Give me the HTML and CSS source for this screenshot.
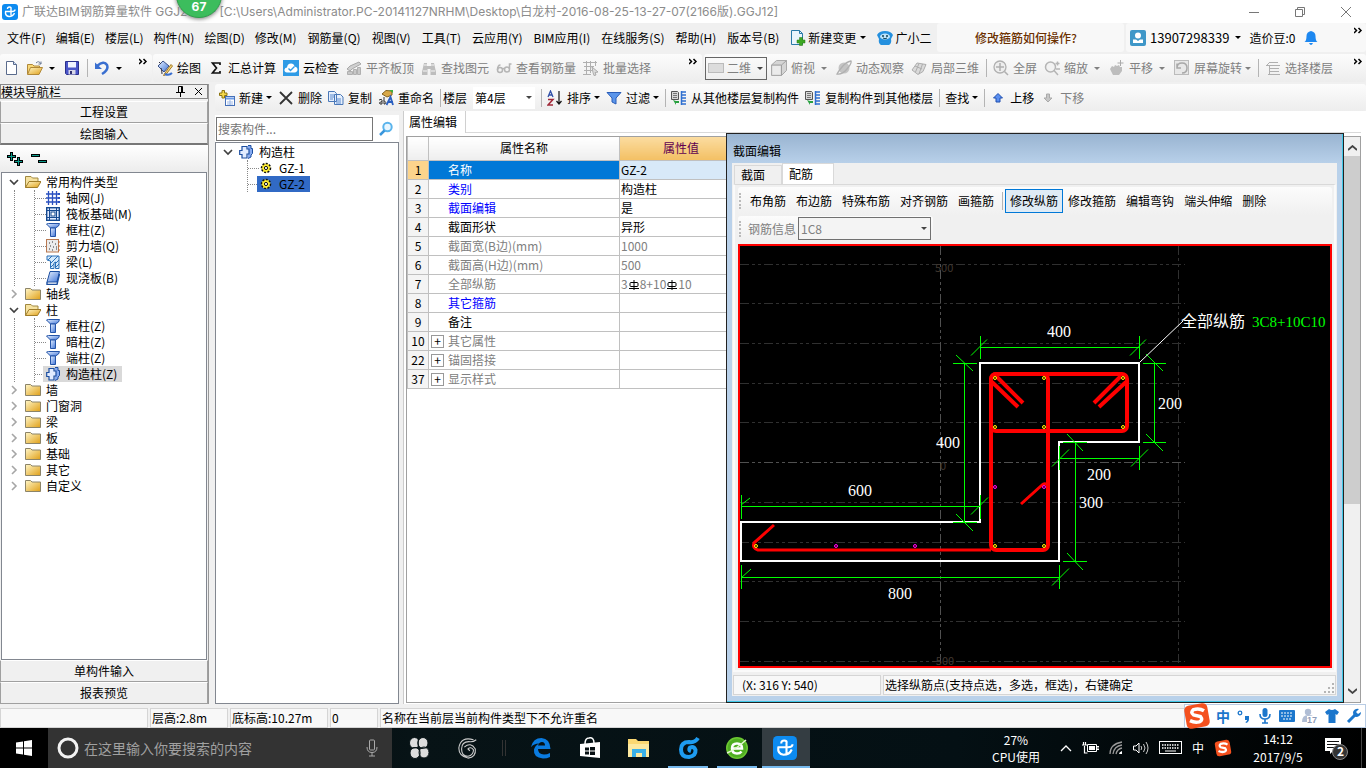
FILE: index.html
```html
<!DOCTYPE html>
<html lang="zh-CN">
<head>
<meta charset="utf-8">
<title>广联达BIM钢筋算量软件</title>
<link rel="stylesheet" href="styles.css">
</head>
<body>
<svg class="defs" width="0" height="0" aria-hidden="true">
  <defs>
    <linearGradient id="gold" x1="0" y1="0" x2="1" y2="1"><stop offset="0" stop-color="#fff6c8"/><stop offset="1" stop-color="#e0a018"/></linearGradient>
    <linearGradient id="blue" x1="0" y1="0" x2="1" y2="1"><stop offset="0" stop-color="#e8f2ff"/><stop offset="1" stop-color="#3f74d8"/></linearGradient>
    <symbol id="logo" viewBox="0 0 16 16"><rect width="16" height="16" rx="3" fill="#0d8bf0"/><path d="M5.500 5q0-2 2-2T9 5v6.500M3 7.500h7q3 0 3-2M3.500 7.500q-.5 4.500 3.500 5 4 0 5.500-3.500" fill="none" stroke="#fff" stroke-width="1.400"/></symbol>
    <symbol id="new" viewBox="0 0 16 16"><path d="M2.500 1.500h7l3 3v10h-10z" fill="#fff" stroke="#5a6b8c"/><path d="M9.500 1.500v3h3" fill="#cfe0fa" stroke="#5a6b8c"/></symbol>
    <symbol id="open" viewBox="0 0 16 16"><path d="M.5 14V4.500h5l1.500 1.500h5.500v2" fill="#f8d878" stroke="#b08838"/><path d="M.5 14.500l3-7h12l-3.500 7z" fill="url(#gold)" stroke="#b08838"/><path d="M9 3q3-3 5 1m0-2.500V4h-2.500" fill="none" stroke="#6a7a96"/></symbol>
    <symbol id="save" viewBox="0 0 16 16"><path d="M1.500 1.500h13v13h-12l-1-1z" fill="#4a55c8" stroke="#2a2f8c"/><path d="M4 2h8v5.500H4z" fill="#f0f3ff"/><path d="M4.500 10h7v4.500h-7z" fill="#d8d8e8"/><path d="M6 11h2v3H6z" fill="#303070"/></symbol>
    <symbol id="undo" viewBox="0 0 16 16"><path d="M3 6q7-6 10-1 2 5-5 9" fill="none" stroke="#3a6fd0" stroke-width="2.500"/><path d="M1 2.500V9h7z" fill="#3a6fd0"/></symbol>
    <symbol id="pen" viewBox="0 0 16 16"><path d="M1 6l5-5 6 5-5 6z" fill="url(#blue)" stroke="#3a5088"/><path d="M2 2l2 2M4 8q1 3 1 6" stroke="#334" fill="none"/><path d="M7 14.500l7-10 1.500 1.500-7 9-2 .5z" fill="#f8d878" stroke="#a07828"/><path d="M8 14q4 2 7-1" stroke="#3a6fd0" stroke-width="2" fill="none"/></symbol>
    <symbol id="sigma" viewBox="0 0 16 16"><path d="M12 5V3H4.500l4 5-4 5H12v-2" fill="none" stroke="#111" stroke-width="1.700"/></symbol>
    <symbol id="cloud" viewBox="0 0 16 16"><rect width="16" height="16" fill="#2e9be6"/><path d="M4 12.500q-3-.5-2.500-3 .5-2 2.500-2 .5-4 4-4 3 0 3.500 3 3 .5 3 3t-3 3z" fill="#fff"/><path d="M5.500 8.500l2 2 4-4" fill="none" stroke="#2e9be6" stroke-width="1.400"/></symbol>
    <symbol id="slab" viewBox="0 0 16 16"><path d="M1 9l3-3 9-4 2 2-9 5-2 2z" fill="#d0d0d0" stroke="#a8a8a8"/><path d="M1.500 11.500h5v3h-5zM7.500 9.500h3v5h-3zM11.500 7.500h3v7h-3z" fill="#c8c8c8" stroke="#b0b0b0"/></symbol>
    <symbol id="binoc" viewBox="0 0 16 16"><path d="M3 3h3v3h4V3h3l2 9v3H9.500V9h-3v6H1v-3z" fill="#bdbdbd"/><path d="M2 11h4M10 11h4M3 5h3M10 5h3" stroke="#f5f5f5"/></symbol>
    <symbol id="glass" viewBox="0 0 16 16"><g fill="none" stroke="#b5b5b5" stroke-width="1.500"><circle cx="4" cy="10" r="2.500"/><circle cx="11" cy="9.500" r="2.500"/><path d="M6.500 9q1-1 2 0M1.500 10q0-5 3-5M13.500 9V4h2"/></g></symbol>
    <symbol id="grid" viewBox="0 0 16 16"><path d="M0 2.500h14M1 6.500h10M1 10.500h8M0 14.500h8M3.500 1v14M7.500 1v12M12.500 1v5" stroke="#b0b0b0" fill="none"/><path d="M9 7l6 5-3 .5 1 2.500-2 .5-1-3z" fill="#ddd" stroke="#aaa"/></symbol>
    <symbol id="box2" viewBox="0 0 16 16"><rect x=".5" y="3.500" width="15" height="9" fill="#dcdcdc" stroke="#bbb"/></symbol>
    <symbol id="cube" viewBox="0 0 16 16"><path d="M.5 5l5-4.500h10v10l-5 5h-10z" fill="#d5d5d5" stroke="#aaa"/><path d="M.5 5h10v10.500M10.500 5l5-4.500" fill="none" stroke="#a0a0a0"/><path d="M1.500 6h8v8.500h-8z" fill="#ebebeb"/></symbol>
    <symbol id="orbit" viewBox="0 0 16 16"><circle cx="8" cy="8" r="5.500" fill="#c4c4c4"/><path d="M1 14q5 1 10-5t4-8q-5 1-9 6t-5 7z" fill="none" stroke="#b0b0b0" stroke-width="1.300"/></symbol>
    <symbol id="part" viewBox="0 0 16 16"><path d="M1 10l5-7 9 1.500-3 7-5 3z" fill="#dadada" stroke="#adadad"/><path d="M4 6l7 3M8 3.500L4.500 12M11.500 4L8 14" stroke="#adadad" fill="none"/></symbol>
    <symbol id="full" viewBox="0 0 16 16"><circle cx="7" cy="7" r="6" fill="#eee" stroke="#b0b0b0" stroke-width="1.300"/><path d="M7 3v8M3 7h8M11.500 11.500L15 15" stroke="#b0b0b0" stroke-width="1.500"/></symbol>
    <symbol id="zoomi" viewBox="0 0 16 16"><circle cx="6.500" cy="7" r="5" fill="#f2f2f2" stroke="#b5b5b5" stroke-width="1.500"/><path d="M10 10.500L14 15M11.500 3.500h4M13.500 1.500v4M12 9h4" stroke="#b5b5b5" stroke-width="1.500"/></symbol>
    <symbol id="hand" viewBox="0 0 16 16"><path d="M1 9l2-3 2 1 1-2 2 1 2-1 1 2 2 0v4l-3 4H4z" fill="#bdbdbd"/><path d="M8.500 3h6M11.500 0v6" stroke="#aaa"/></symbol>
    <symbol id="rot" viewBox="0 0 16 16"><rect x=".5" y=".5" width="14" height="14" fill="#e8e8e8" stroke="#bbb"/><path d="M3 8q0-5 5-5t5 5-5 5M3 3.500V8h4" fill="none" stroke="#a8a8a8" stroke-width="1.500"/></symbol>
    <symbol id="floor-set" viewBox="0 0 16 16"><path d="M4 2.500h9M1 5.500h14M5 8.500h9M5 11.500h9M3 14.500h12M4 3L1 6M4.500 6v8" stroke="#b0b0b0" fill="none"/></symbol>
    <symbol id="chg" viewBox="0 0 16 16"><path d="M1.500.5h8l3 3v11h-11z" fill="#eaf5fc" stroke="#2a7aa8"/><path d="M9.500.5v3h3" fill="none" stroke="#2a7aa8"/><path d="M9.500 7.500h3v2.500H15v3h-2.500v2.500h-3V13H7v-3h2.500z" fill="#3da822" stroke="#287614" stroke-width=".5"/></symbol>
    <symbol id="mascot" viewBox="0 0 16 16"><path d="M0 5q2-4 8-4t8 4l-2 4q1 4-2 6H4q-3-2-2-6z" fill="#2490de"/><ellipse cx="8" cy="6.500" rx="5" ry="3" fill="#bfe4fb"/><circle cx="6" cy="6" r="1" fill="#145"/><circle cx="10" cy="6" r="1" fill="#145"/><path d="M6 8q2 1.500 4 0" stroke="#145" fill="none"/></symbol>
    <symbol id="user" viewBox="0 0 16 16"><rect width="16" height="16" rx="2" fill="#3f97c8"/><circle cx="8" cy="5.500" r="3" fill="#fff"/><path d="M3 13V9.500h3l2 1.500 2-1.500h3V13z" fill="#fff"/></symbol>
    <symbol id="bell" viewBox="0 0 16 16"><path d="M1.500 12q2-1 2-6 0-4 4.500-5 4.500 1 4.500 5 0 5 2 6zM6 13h4q-2 4-4 0" fill="#1e88f0"/></symbol>
    <symbol id="addn" viewBox="0 0 16 16"><path d="M3 .5h2.500V3H8v2.500H5.500V8H3V5.500H.5V3H3z" fill="#f5d84a" stroke="#8c7410"/><rect x="6.500" y="6.500" width="9" height="9" fill="#fff" stroke="#4570b8"/><path d="M7 7.500h8v2H7z" fill="#6c9be6"/><path d="M8 12h6M8 14h6M11 10v5" stroke="#9db9e8"/></symbol>
    <symbol id="del" viewBox="0 0 16 16"><path d="M2 2l12 12M14 2L2 14" stroke="#333" stroke-width="1.800"/></symbol>
    <symbol id="copy" viewBox="0 0 16 16"><path d="M.5 1.500h6l2 2v8h-8zM6.500 4.500h6l2.500 2.500v7.500H6.500z" fill="#e6effc" stroke="#4a78b8"/><path d="M2 5h4M2 7h4M2 9h3M8 9h5M8 11h5M8 13h5" stroke="#5d8cd0"/></symbol>
    <symbol id="ren" viewBox="0 0 16 16"><path d="M4 4l4-3.500 6 .5v4l-5 2z" fill="#d8a848" stroke="#806020"/><path d="M11 0h4v3z" fill="#3cae3c"/><path d="M1 10q3-1.500 3 0v4H2q-2-1.500 2-2.500M6 7v7h1q2-1.500-1-3.500" fill="none" stroke="#333"/><path d="M8.500 15l4-8 2.500 8M10 12h5" stroke="#2a5fc0" stroke-width="1.800" fill="none"/></symbol>
    <symbol id="sort" viewBox="0 0 16 16"><path d="M1 7l2.500-6L6 7M2 5h3" fill="none" stroke="#3050a8" stroke-width="1.300"/><path d="M1 9.500h5L1 15h5" fill="none" stroke="#a02838" stroke-width="1.500"/><path d="M12 1v13M9.500 11l2.500 3 2.500-3" fill="none" stroke="#111" stroke-width="1.200"/></symbol>
    <symbol id="filt" viewBox="0 0 16 16"><path d="M1 2.500h14L10 8v6l-4-2V8z" fill="#5b95ea" stroke="#2a5db8"/></symbol>
    <symbol id="fcopy" viewBox="0 0 16 16"><path d="M.5 1.500h6l1 1v7h-7z" fill="#d8d8d8" stroke="#555"/><path d="M2 3.500h4M2 5.500h4M2 7.500h4" stroke="#777"/><path d="M2 10l3 5v-2h3v-2H5z" fill="#28a040"/><path d="M10.500 1v14M10.500 2H15M10.500 5H15M10.500 8H15M10.500 11H15M10.500 14H15" stroke="#2f6fd0" stroke-width="1.500"/></symbol>
    <symbol id="up" viewBox="0 0 16 16"><path d="M8 3.500l4.500 4.500H10v4H6V8H3.500z" fill="#5b8ff0" stroke="#1e4fb0"/></symbol>
    <symbol id="down" viewBox="0 0 16 16"><path d="M8 12L4 8h2.500V4h3v4H12z" fill="#c6c6c6" stroke="#aaa"/></symbol>
    <symbol id="fold" viewBox="0 0 16 14"><path d="M.5 12.500V1.500h5L7 3h8.500v9.500z" fill="url(#gold)" stroke="#8c8468"/></symbol>
    <symbol id="foldo" viewBox="0 0 16 14"><path d="M.5 12.500v-11H6L7.500 3H13v3.500" fill="#f6e2a0" stroke="#a08840"/><path d="M.5 12.500L4 6.500h12l-3.500 6z" fill="url(#gold)" stroke="#a07c28"/></symbol>
    <symbol id="axis" viewBox="0 0 14 14"><path d="M0 3h12M0 7h12M0 11h12M2.500 0v14M6.500 0v14M10.500 0v14" stroke="#2a50c0" stroke-width="1.300"/><path d="M12 2h2v2h-2zM12 6h2v2h-2zM12 10h2v2h-2z" fill="#2a50c0"/></symbol>
    <symbol id="raft" viewBox="0 0 14 14"><rect x=".7" y=".7" width="12.600" height="12.600" fill="#dfeaff" stroke="#164a90" stroke-width="1.400"/><path d="M1 3.500h12M1 10.500h12M3.500 1v12M10.500 1v12" stroke="#164a90"/><rect x="5" y="5" width="4" height="4" fill="#fff" stroke="#164a90"/></symbol>
    <symbol id="col" viewBox="0 0 14 14"><path d="M.5 1l2-.5h11l-1 2.500-3 2h-5z" fill="url(#blue)" stroke="#2454a8"/><path d="M4.500 5h5v8.500h-5z" fill="url(#blue)" stroke="#2454a8"/></symbol>
    <symbol id="wall" viewBox="0 0 14 14"><rect x=".5" y=".5" width="12" height="12.500" fill="#ececec" stroke="#b87850"/><path d="M3 4h1M6 3h1M9 5h1M4 7h1M7 8h1M3 10h1M6 11h1M10 10h1M10 8h1" stroke="#333"/><path d="M12 3h2M12 7h2M12 11h2" stroke="#c86830"/></symbol>
    <symbol id="beam" viewBox="0 0 14 14"><path d="M1 1h12v12.500H9.500V7L8 8v5.500H4.500V6L1 5z" fill="#d4eafc" stroke="#2a70b8"/><path d="M2 5l4-4M5 8l7-7M5 12l3-3M10 8l3-3M10 12l3-3" stroke="#2a70b8"/></symbol>
    <symbol id="pour" viewBox="0 0 14 14"><path d="M4 .5h9.500L11 11H1z" fill="url(#blue)" stroke="#1c4ea0"/><path d="M1 11v2.500h10L13.500 3" fill="none" stroke="#1c4ea0" stroke-width="1.400"/></symbol>
    <symbol id="gz" viewBox="0 0 14 14"><path d="M9 .5h3v3h1.500v5L12 10v2l-3 1.500" fill="#86aaf0" stroke="#1c4ea0"/><path d="M3 1.500h5V4h2v5H8v4H3V9.500H.7v-4H3z" fill="#e2ecff" stroke="#1c4ea0" stroke-width="1.200"/></symbol>
    <symbol id="gear" viewBox="0 0 12 12"><circle cx="6" cy="6" r="4.500" fill="#ffee30" stroke="#111" stroke-width="1.500" stroke-dasharray="2 1.400"/><circle cx="6" cy="6" r="1.600" fill="#fff" stroke="#111"/></symbol>
    <symbol id="S" viewBox="0 0 24 24"><rect x="2" y="2" width="20" height="20" rx="4" fill="#f4501e" transform="rotate(-10 12 12)"/><path d="M18 7.500q-4-2.500-9-1-3 2.500 0 4.500l6 1.500q2.500 3-1 4.500-4 1-8-1" fill="none" stroke="#fff" stroke-width="3"/></symbol>
    <symbol id="chev" viewBox="0 0 9 8"><path d="M0 1l2.500 2.500L0 6M4.500 1L7 3.500 4.500 6" fill="none" stroke="#000" stroke-width="1.500"/></symbol>
    <symbol id="open-arrow" viewBox="0 0 10 10"><path d="M1 3l4 4 4-4" fill="none" stroke="#404040" stroke-width="1.700"/></symbol>
    <symbol id="shut-arrow" viewBox="0 0 10 10"><path d="M3 1l4 4-4 4" fill="none" stroke="#a6a6a6" stroke-width="1.600"/></symbol>
    <symbol id="swirl" viewBox="0 0 24 24"><path d="M22 2q-3 5-9 4-8 0-8 7.500T13 21q7-1 6.500-7-1.500-4-5.500-2.500-2 2.500 1 3.500" fill="none" stroke="currentColor" stroke-width="4"/></symbol>
  </defs>
</svg>

<header class="title">
  <svg class="i16"><use href="#logo"/></svg>
  <span class="title-text">广联达BIM钢筋算量软件 GGJ2013 - [C:\Users\Administrator.PC-20141127NRHM\Desktop\白龙村-2016-08-25-13-27-07(2166版).GGJ12]</span>
  <div class="winbtns">
    <button aria-label="最小化"><svg width="12" height="12"><path d="M1 6.500h10" stroke="#777"/></svg></button>
    <button aria-label="还原"><svg width="12" height="12"><path d="M1.500 3.500h7v7h-7zM3.500 3V1.500h7v7H9" fill="none" stroke="#777"/></svg></button>
    <button aria-label="关闭"><svg width="12" height="12"><path d="M1 1l10 10M11 1L1 11" stroke="#777"/></svg></button>
  </div>
  <div class="ball">67</div>
</header>

<nav class="menu">
  <div class="menu-list">
    <button>文件(F)</button><button>编辑(E)</button><button>楼层(L)</button><button>构件(N)</button><button>绘图(D)</button><button>修改(M)</button><button>钢筋量(Q)</button><button>视图(V)</button><button>工具(T)</button><button>云应用(Y)</button><button>BIM应用(I)</button><button>在线服务(S)</button><button>帮助(H)</button><button>版本号(B)</button>
    <button class="drop"><svg class="i16"><use href="#chg"/></svg>新建变更</button>
    <button><svg class="i16"><use href="#mascot"/></svg>广小二</button>
  </div>
  <a class="tip" href="#">修改箍筋如何操作?</a>
  <div class="account">
    <button class="drop phone"><svg class="i16"><use href="#user"/></svg>13907298339</button>
    <button>造价豆:0</button>
    <button aria-label="通知"><svg class="i16"><use href="#bell"/></svg></button>
    <svg class="more"><use href="#chev"/></svg>
  </div>
</nav>

<div class="tools">
  <div class="group g-file">
    <button aria-label="新建"><svg class="i16"><use href="#new"/></svg></button>
    <button class="drop" aria-label="打开"><svg class="i16"><use href="#open"/></svg></button>
    <button aria-label="保存"><svg class="i16"><use href="#save"/></svg></button>
    <i class="sep"></i>
    <button class="drop" aria-label="撤销"><svg class="i16"><use href="#undo"/></svg></button>
    <svg class="more"><use href="#chev"/></svg>
  </div>
  <div class="group g-draw">
    <button><svg class="i16"><use href="#pen"/></svg>绘图</button>
    <button><svg class="i16"><use href="#sigma"/></svg>汇总计算</button>
    <button><svg class="i16"><use href="#cloud"/></svg>云检查</button>
    <button disabled><svg class="i16"><use href="#slab"/></svg>平齐板顶</button>
    <button disabled><svg class="i16"><use href="#binoc"/></svg>查找图元</button>
    <button disabled><svg class="i16"><use href="#glass"/></svg>查看钢筋量</button>
    <button disabled><svg class="i16"><use href="#grid"/></svg>批量选择</button>
    <svg class="more"><use href="#chev"/></svg>
  </div>
  <div class="group g-view">
    <div class="viewsel"><svg class="i16"><use href="#box2"/></svg><select aria-label="视图" disabled><option>二维</option></select></div>
    <button class="drop" disabled><svg class="i16"><use href="#cube"/></svg>俯视</button>
    <button disabled><svg class="i16"><use href="#orbit"/></svg>动态观察</button>
    <button disabled><svg class="i16"><use href="#part"/></svg>局部三维</button>
    <i class="sep"></i>
    <button disabled><svg class="i16"><use href="#full"/></svg>全屏</button>
    <button class="drop" disabled><svg class="i16"><use href="#zoomi"/></svg>缩放</button>
    <button class="drop" disabled><svg class="i16"><use href="#hand"/></svg>平移</button>
    <button class="drop tight" disabled><svg class="i16"><use href="#rot"/></svg>屏幕旋转</button>
    <i class="sep"></i>
    <button disabled><svg class="i16"><use href="#floor-set"/></svg>选择楼层</button>
    <svg class="more"><use href="#chev"/></svg>
  </div>
</div>

<main class="main">
  <aside class="nav">
    <div class="nav-head"><span>模块导航栏</span>
      <svg width="9" height="11"><path d="M2.500.5h4v6h-4zM0 6.500h9M4.500 7v4M5.500 1v5" fill="none" stroke="#000"/></svg>
      <svg width="9" height="9"><path d="M1 1l7 7M8 1L1 8" stroke="#000"/></svg>
    </div>
    <button class="bar">工程设置</button>
    <button class="bar active">绘图输入</button>
    <div class="nav-tools">
      <button aria-label="展开"><svg width="18" height="14"><path d="M4.500 0v9M0 4.500h9M11.500 5v9M7 9.500h9" stroke="#000" stroke-width="3"/><path d="M4.500 1v7M1 4.500h7M11.500 6v7M8 9.500h7" stroke="#0a9a8a"/></svg></button>
      <button aria-label="折叠"><svg width="18" height="14"><path d="M0 3.500h9M7 9.500h9" stroke="#000" stroke-width="3"/><path d="M1 3.500h7M8 9.500h7" stroke="#0a9a8a"/></svg></button>
    </div>
    <ul class="tree">
      <li><div class="node"><svg class="tog"><use href="#open-arrow"/></svg><svg class="fo"><use href="#foldo"/></svg>常用构件类型</div>
        <ul>
          <li><svg class="ic"><use href="#axis"/></svg>轴网(J)</li>
          <li><svg class="ic"><use href="#raft"/></svg>筏板基础(M)</li>
          <li><svg class="ic"><use href="#col"/></svg>框柱(Z)</li>
          <li><svg class="ic"><use href="#wall"/></svg>剪力墙(Q)</li>
          <li><svg class="ic"><use href="#beam"/></svg>梁(L)</li>
          <li><svg class="ic"><use href="#pour"/></svg>现浇板(B)</li>
        </ul></li>
      <li><div class="node"><svg class="tog"><use href="#shut-arrow"/></svg><svg class="fo"><use href="#fold"/></svg>轴线</div></li>
      <li><div class="node"><svg class="tog"><use href="#open-arrow"/></svg><svg class="fo"><use href="#foldo"/></svg>柱</div>
        <ul>
          <li><svg class="ic"><use href="#col"/></svg>框柱(Z)</li>
          <li><svg class="ic"><use href="#col"/></svg>暗柱(Z)</li>
          <li><svg class="ic"><use href="#col"/></svg>端柱(Z)</li>
          <li><span class="cur"><svg class="ic"><use href="#gz"/></svg>构造柱(Z)</span></li>
        </ul></li>
      <li><div class="node"><svg class="tog"><use href="#shut-arrow"/></svg><svg class="fo"><use href="#fold"/></svg>墙</div></li>
      <li><div class="node"><svg class="tog"><use href="#shut-arrow"/></svg><svg class="fo"><use href="#fold"/></svg>门窗洞</div></li>
      <li><div class="node"><svg class="tog"><use href="#shut-arrow"/></svg><svg class="fo"><use href="#fold"/></svg>梁</div></li>
      <li><div class="node"><svg class="tog"><use href="#shut-arrow"/></svg><svg class="fo"><use href="#fold"/></svg>板</div></li>
      <li><div class="node"><svg class="tog"><use href="#shut-arrow"/></svg><svg class="fo"><use href="#fold"/></svg>基础</div></li>
      <li><div class="node"><svg class="tog"><use href="#shut-arrow"/></svg><svg class="fo"><use href="#fold"/></svg>其它</div></li>
      <li><div class="node"><svg class="tog"><use href="#shut-arrow"/></svg><svg class="fo"><use href="#fold"/></svg>自定义</div></li>
    </ul>
    <button class="bar">单构件输入</button>
    <button class="bar">报表预览</button>
  </aside>

  <section class="work">
    <div class="group g-comp">
      <button class="drop tight"><svg class="i16"><use href="#addn"/></svg>新建</button>
      <button><svg class="i16"><use href="#del"/></svg>删除</button>
      <button><svg class="i16"><use href="#copy"/></svg>复制</button>
      <button><svg class="i16"><use href="#ren"/></svg>重命名</button>
      <div class="floor"><i class="sep"></i><label for="floor">楼层</label><span class="selwrap"><select id="floor"><option>第4层</option></select></span></div>
      <i class="sep"></i>
      <button class="drop tight"><svg class="i16"><use href="#sort"/></svg>排序</button>
      <button class="drop tight"><svg class="i16"><use href="#filt"/></svg>过滤</button>
      <i class="sep"></i>
      <button><svg class="i16"><use href="#fcopy"/></svg>从其他楼层复制构件</button>
      <button><svg class="i16"><use href="#fcopy"/></svg>复制构件到其他楼层</button>
      <i class="sep"></i>
      <button class="drop tight">查找</button>
      <i class="sep"></i>
      <button><svg class="i16"><use href="#up"/></svg>上移</button>
      <button disabled><svg class="i16"><use href="#down"/></svg>下移</button>
    </div>
    <div class="panes">
      <section class="comps">
        <form class="search">
          <input type="text" aria-label="搜索构件" placeholder="搜索构件...">
          <button type="button" aria-label="搜索"><svg width="16" height="16"><circle cx="9.500" cy="6" r="4.200" fill="#e8f6ff" stroke="#5ab4ec" stroke-width="2"/><path d="M6.500 9.500L2 14" stroke="#3a96dc" stroke-width="2.500"/></svg></button>
        </form>
        <ul class="tree comp-tree">
          <li><div class="node"><svg class="tog"><use href="#open-arrow"/></svg><svg class="fo"><use href="#gz"/></svg>构造柱</div>
            <ul>
              <li><span class="lf"><svg class="ge"><use href="#gear"/></svg>GZ-1</span></li>
              <li><span class="lf sel"><svg class="ge"><use href="#gear"/></svg>GZ-2</span></li>
            </ul></li>
        </ul>
      </section>
      <section class="props">
        <div class="tabs"><button class="on">属性编辑</button></div>
        <div class="sheet">
          <table>
            <thead><tr><th></th><th>属性名称</th><th class="hl">属性值</th></tr></thead>
            <tbody>
              <tr class="on"><td>1</td><td>名称</td><td>GZ-2</td></tr>
              <tr class="key"><td>2</td><td>类别</td><td>构造柱</td></tr>
              <tr class="key"><td>3</td><td>截面编辑</td><td>是</td></tr>
              <tr><td>4</td><td>截面形状</td><td>异形</td></tr>
              <tr class="off"><td>5</td><td>截面宽(B边)(mm)</td><td>1000</td></tr>
              <tr class="off"><td>6</td><td>截面高(H边)(mm)</td><td>500</td></tr>
              <tr class="off"><td>7</td><td>全部纵筋</td><td>3<svg class="rb" viewBox="0 0 10 10"><path d="M0 8.500h10M5 0v10M1 3.500q0-1 1-1h6q1 0 1 1v2q0 1-1 1H2q-1 0-1-1z" fill="none" stroke="#000"/></svg>8+10<svg class="rb" viewBox="0 0 10 10"><path d="M0 8.500h10M5 0v10M1 3.500q0-1 1-1h6q1 0 1 1v2q0 1-1 1H2q-1 0-1-1z" fill="none" stroke="#000"/></svg>10</td></tr>
              <tr class="key"><td>8</td><td>其它箍筋</td><td></td></tr>
              <tr><td>9</td><td>备注</td><td></td></tr>
              <tr class="off exp"><td>10</td><td><button aria-label="展开">+</button>其它属性</td><td></td></tr>
              <tr class="off exp"><td>22</td><td><button aria-label="展开">+</button>锚固搭接</td><td></td></tr>
              <tr class="off exp"><td>37</td><td><button aria-label="展开">+</button>显示样式</td><td></td></tr>
            </tbody>
          </table>
          <div class="scroll">
            <svg width="9" height="6"><path d="M0 5l4.500-4L9 5" fill="none" stroke="#444" stroke-width="1.700"/></svg>
            <i></i><b></b>
            <svg width="9" height="6"><path d="M0 1l4.500 4L9 1" fill="none" stroke="#444" stroke-width="1.700"/></svg>
          </div>
        </div>
      </section>
    </div>
  </section>

  <section class="dialog" role="dialog" aria-label="截面编辑">
    <h2>截面编辑</h2>
    <div class="dlg-body">
      <div class="dlg-tabs"><button>截面</button><button class="on">配筋</button></div>
      <div class="dlg-page">
        <div class="dlg-tools">
          <i class="grip"></i>
          <button>布角筋</button><button>布边筋</button><button>特殊布筋</button><button>对齐钢筋</button><button>画箍筋</button><i class="sep"></i><button class="on">修改纵筋</button><button>修改箍筋</button><button>编辑弯钩</button><button>端头伸缩</button><button>删除</button>
        </div>
        <div class="dlg-info">
          <i class="grip"></i><label for="rebar">钢筋信息</label>
          <span class="selwrap"><select id="rebar" disabled><option>1C8</option></select></span>
        </div>
        <svg class="cad" viewBox="740 246 590 420">
          <g class="grid" stroke-dasharray="9 3 3 3 3 3">
            <path d="M740 264.500h445M740 303.500h445M740 343.500h445M740 383.500h445M740 422.500h445M740 502.500h445M740 542.500h445M740 581.500h445M740 621.500h445M740 661.500h445M1178.500 246v420"/>
            <path class="axis" d="M740 462.500h445M940.500 246v420"/>
          </g>
          <g class="scale"><text x="935" y="272">500</text><text x="940" y="470">0</text><text x="932" y="665">-500</text></g>
          <path class="outline" d="M980 363h159v79h-80v119H741v-39h239z"/>
          <path class="dim" d="M980.500 347.500h159M980.500 336v23M1139.500 336v23M971 355.500l16-16M1130 355.500l16-16
            M964.500 363v160M953 363.500h24M953 522.500h24M956 355l17 16M956 514l17 17
            M741 506.500h239M741.500 495v24M980.500 495v24M741 505l9-7M971 514.500l17-17
            M741 577.500h318M741.500 565v24M1059.500 565v24M741 578l10-9M1052 585.500l17-17
            M1154.500 363v80M1143 363.500h23M1143 442.500h23M1146 354l17 17M1146 434l17 17
            M1059 458.500h80M1059.500 446v24M1139.500 446v24M1052 466.500l17-17M1131 466.500l17-17
            M1075.500 442v119M1063 442.500h24M1063 561.500h24M1067 434l16 17M1067 553l16 17"/>
          <path class="leader" d="M1140 362l43-41"/>
          <g class="bars">
            <rect x="991" y="374" width="136" height="57" rx="5"/>
            <rect x="991" y="374" width="57" height="176" rx="5"/>
            <path d="M996 376l27 27M992 382l26 25M1121 376l-27 27M1126 382l-27 25"/>
            <path class="thin" d="M1048 486q-3-4-6-1l-21 19M991 550H758q-6-2-4-7l20-18"/>
          </g>
          <g class="dot y"><circle cx="995" cy="378" r="1.500"/><circle cx="1044" cy="378" r="1.500"/><circle cx="1123" cy="378" r="1.500"/><circle cx="995" cy="427" r="1.500"/><circle cx="1044" cy="427" r="1.500"/><circle cx="1123" cy="427" r="1.500"/><circle cx="995" cy="546" r="1.500"/><circle cx="1044" cy="546" r="1.500"/><circle cx="756" cy="546" r="1.500"/></g>
          <g class="dot m"><circle cx="995" cy="487" r="1.500"/><circle cx="1044" cy="487" r="1.500"/><circle cx="836" cy="546" r="1.500"/><circle cx="915" cy="546" r="1.500"/></g>
          <g class="val"><text x="1047" y="337">400</text><text x="936" y="448">400</text><text x="1158" y="409">200</text><text x="1087" y="480">200</text><text x="1079" y="508">300</text><text x="848" y="496">600</text><text x="888" y="599">800</text></g>
          <text class="note" x="1181" y="327">全部纵筋</text><text class="spec" x="1252" y="327">3C8+10C10</text>
        </svg>
      </div>
      <div class="dlg-status"><span>(X: 316 Y: 540)</span><span>选择纵筋点(支持点选，多选，框选)，右键确定</span>
        <svg width="11" height="11"><path d="M8 1h2M8 5h2M4 5h2M8 9h2M4 9h2M0 9h2" stroke="#b5b5b5" stroke-width="2"/></svg></div>
    </div>
  </section>
</main>

<div class="status"><span></span><span>层高:2.8m</span><span>底标高:10.27m</span><span>0</span><span>名称在当前层当前构件类型下不允许重名</span>
  <div class="ime">
    <svg width="28" height="28"><use href="#S"/></svg>
    <b>中</b>
    <svg width="14" height="14"><circle cx="3" cy="4" r="1.800" fill="none" stroke="#1b76cc" stroke-width="1.300"/><path d="M8 7h4v3q0 3-3 4l-.5-1q2-1 1.500-2H8z" fill="#1b76cc"/></svg>
    <svg width="14" height="16"><rect x="4.500" y="0" width="5" height="9" rx="2.500" fill="#1b76cc"/><path d="M2 6q0 5 5 5t5-5M7 11v4M4 15h6" fill="none" stroke="#1b76cc" stroke-width="1.600"/></svg>
    <svg width="16" height="12"><rect width="16" height="12" rx="1" fill="#1b76cc"/><path d="M2 3h12M2 6h12M4 9h8" stroke="#fff" stroke-dasharray="2 1"/></svg>
    <svg width="16" height="16"><circle cx="6" cy="4" r="3.200" fill="#b0bdd4"/><path d="M0 14q0-7 6-7 4 0 5 1H5v6z" fill="#b0bdd4"/><text x="5" y="15" class="tiny">17</text></svg>
    <svg width="14" height="14"><path d="M4 0q3 2 6 0l4 3-2 3-1.500-1v9h-7V5L2 6 0 3z" fill="#1b76cc"/></svg>
    <svg width="16" height="16"><path d="M2 14l7-7" stroke="#1b76cc" stroke-width="3"/><path d="M13 1q-4-1-6 3 0 5 4 5 4-1 4-5l-3 2-2-2z" fill="#1b76cc"/></svg>
  </div>
</div>

<footer class="taskbar">
  <button class="start" aria-label="开始"><svg width="16" height="16"><path d="M0 2.500l7-1v6H0zM8 1.300L16 0v7.500H8zM0 8.500h7v6l-7-1zM8 8.500h8V16l-8-1.300z" fill="#fff"/></svg></button>
  <label class="find"><svg width="22" height="22"><circle cx="11" cy="11" r="9" fill="none" stroke="#f2f2f2" stroke-width="3"/></svg>
    <input type="text" placeholder="在这里输入你要搜索的内容" aria-label="搜索">
    <svg width="12" height="18"><rect x="3.500" y="1" width="5" height="10" rx="1" fill="none" stroke="#aaa"/><path d="M1 8q0 5.500 5 5.500T11 8M6 13.500V17M3 17h6" fill="none" stroke="#aaa"/></svg></label>
  <div class="apps">
    <button aria-label="应用"><svg width="24" height="24" viewBox="0 0 24 24"><g fill="#ddd" stroke="#071316"><ellipse cx="7.500" cy="7" rx="5" ry="5.500"/><ellipse cx="16" cy="7" rx="5" ry="5.500"/><ellipse cx="8" cy="17" rx="5" ry="5.500"/><ellipse cx="17" cy="16.500" rx="5" ry="5.500"/></g><path d="M12 2q-2 5 0 10t0 10M3 13q5-2 9-1t10-1" fill="none" stroke="#071316" stroke-width="1.200"/></svg></button>
    <button aria-label="旋涡"><svg width="22" height="22" viewBox="0 0 24 24"><path d="M21 3q-4 3-8 2-8 0-8 8t7 8q6-1 6-7-3-4-6-1l2 2M18 3Q4-1 2 12q0 9 10 11 9-1 8-10-5-8-12-2" fill="none" stroke="#ccc" stroke-width="1.200"/></svg></button>
    <i class="dbl"></i>
    <button aria-label="Edge"><svg width="22" height="22" viewBox="0 0 22 22"><path d="M1 10Q3 1 11.500 1 20 1.500 20.500 12H8q0 5 6 5.500 3 0 6-1.500v4q-3 1.500-7 1.500-10-1-9-9 1-4 5-6-5 0-8 3.500zm7-1.500h7Q15 5 12 5T8 8.500z" fill="#0a7be0"/></svg></button>
    <button aria-label="商店"><svg width="22" height="24" viewBox="0 0 22 24"><path d="M1 8l20-2v16l-20-2z" fill="#fff"/><path d="M6 8q0-6 4-6 5-1 5 5" fill="none" stroke="#fff" stroke-width="1.500"/><path d="M6 11.500h4v3H6zM11 11h5v3.500h-5zM6 15.500h4v3H6zM11 15.500h5v3.500h-5z" fill="#071013"/></svg></button>
    <button aria-label="文件资源管理器"><svg width="22" height="20" viewBox="0 0 22 20"><path d="M0 1h8l2 2h11v16H0z" fill="#fbd872"/><path d="M0 6h21v13H0z" fill="#fde9a0"/><path d="M4 19v-8h14v8h-4v-4H8v4z" fill="#3ab0e8"/></svg></button>
    <button class="run swirl" aria-label="广联达"><svg width="24" height="24"><use href="#swirl"/></svg></button>
    <button class="run" aria-label="浏览器"><svg width="24" height="24" viewBox="0 0 24 24"><circle cx="12" cy="12" r="11" fill="#6cc832"/><circle cx="12" cy="12" r="9.500" fill="#4fae22"/><path d="M7 12.500h10q0-5-5-5t-5 5 5 5q3 0 4.500-2" fill="none" stroke="#fff" stroke-width="2.500"/><path d="M2 17Q10 14 21 4" stroke="#e4f8d0" fill="none" stroke-width="1.500"/></svg></button>
    <button class="run cur" aria-label="钢筋算量"><svg width="24" height="24"><use href="#logo"/></svg></button>
  </div>
  <div class="cpu">27%<br>CPU使用</div>
  <div class="tray">
    <svg width="12" height="8"><path d="M1 7l5-5 5 5" fill="none" stroke="#fff" stroke-width="1.300"/></svg>
    <svg width="17" height="14"><path d="M5.500 3.500h9v7h-9zM15 5.500h2v3h-2z" fill="none" stroke="#fff"/><path d="M7 5h6v4H7z" fill="#fff"/><path d="M0 4h5M1.500 1v3M3.500 1v3M2.500 5v7h3" stroke="#fff" stroke-width="1.200" fill="none"/></svg>
    <svg width="14" height="14"><path d="M1 13Q1 3 13 1M4 13q1-8 9-9M7 13q1-5 6-6" fill="none" stroke="#999" stroke-width="1.300"/><path d="M10 13q0-2 3-3v3z" fill="#fff"/></svg>
    <svg width="16" height="14"><path d="M.5 5H3l3-3v10L3 9H.5z" fill="none" stroke="#fff"/><path d="M8 5q1.500 2 0 4M10.500 3q3 4 0 8M13 1q4 6 0 12" fill="none" stroke="#ccc"/></svg>
    <svg width="23" height="14"><rect x=".5" y=".5" width="22" height="12" fill="none" stroke="#fff"/><path d="M3 4h17M3 7h17" stroke="#fff" stroke-width="1.300" stroke-dasharray="1.500 1"/><path d="M6 10h11" stroke="#fff"/></svg>
    <span>中</span>
    <svg width="18" height="18"><use href="#S"/></svg>
  </div>
  <div class="clock">14:12<br>2017/9/5</div>
  <button class="note-btn" aria-label="通知"><svg width="26" height="26"><path d="M1 3h16v13H9l-3 3v-3H1z" fill="#fff"/><path d="M3 6.500h12M3 9.500h12M3 12.500h8" stroke="#111"/><circle cx="16" cy="17" r="7.500" fill="#333" stroke="#888"/><text x="13" y="21">2</text></svg></button>
  <i class="edge"></i>
</footer>
</body>
</html>
```
FILE: styles.css
```css
* { box-sizing: border-box; }
body {
  margin: 0;
  min-height: 100vh;
  display: flex;
  flex-direction: column;
  overflow: hidden;
  background: #f0f0f0;
  color: #000;
  font: 12px/16px "Noto Sans CJK SC", sans-serif;
}
button, input, select { font: inherit; color: inherit; }
button {
  display: inline-flex;
  align-items: center;
  gap: 4px;
  margin: 0;
  padding: 0;
  border: 0;
  background: none;
  white-space: nowrap;
}
button:disabled { color: #808080; }
select { appearance: none; border: 0; background: none; opacity: 1; padding: 0; }
svg { flex: none; display: block; }
ul { list-style: none; margin: 0; padding: 0; }
.defs { position: absolute; }
.i16 { width: 16px; height: 16px; }
.more { width: 9px; height: 8px; margin-left: auto; align-self: flex-start; margin-top: 4px; }

/* title bar */
.title {
  position: relative;
  display: flex;
  align-items: center;
  gap: 4px;
  height: 23px;
  padding: 0 14px 0 2px;
  background: #fff;
  color: #8c8c8c;
  font-family: Inter, "Noto Sans CJK SC", sans-serif;
}
.title-text { white-space: nowrap; }
.winbtns { display: flex; gap: 34px; margin-left: auto; }
.ball {
  position: absolute;
  left: 176px;
  top: -28px;
  z-index: 3;
  width: 46px;
  height: 46px;
  padding-top: 26px;
  border-radius: 50%;
  border: 1px solid #2f9f4c;
  background: #3cbd5d;
  box-shadow: 0 1px 4px #777;
  color: #fff;
  font-weight: bold;
  text-align: center;
}

/* menu */
.menu { display: flex; height: 31px; padding-bottom: 2px; align-items: stretch; }
.menu-list { flex: none; display: flex; gap: 10px; padding-left: 7px; width: 937px; }
.menu-list button { gap: 2px; }
.menu-list button:nth-child(n+7) { margin-left: 1px; }
.tip {
  flex: 0 0 187px;
  display: flex;
  align-items: center;
  padding-left: 38px;
  background: #f8f8f8;
  border-radius: 3px;
  color: #6b3000;
  font-weight: 500;
  text-decoration: none;
}
.account {
  flex: 1;
  display: flex;
  gap: 8px;
  margin-left: 2px;
  padding: 0 3px 0 4px;
  background: #f8f8f8;
  border-radius: 3px;
}
.phone { font-size: 13px; }
.drop::after {
  content: "";
  margin: 0 2px;
  border: 3px solid transparent;
  border-top-color: currentColor;
  border-bottom: 0;
}
.drop.tight::after { margin: 0 0 0 -1px; }
.menu .drop::after { margin: 0 0 0 2px; }

/* toolbars */
.tools { display: flex; height: 30px; padding-bottom: 2px; }
.group {
  display: flex;
  align-items: center;
  gap: 7px;
  padding: 0 4px;
  border-radius: 3px;
  background: linear-gradient(#fcfcfc, #ededed);
}
.sep { flex: none; width: 1px; height: 18px; background: #b4b4b4; }
.group .sep { margin-right: -1px; }
.g-file { flex: none; width: 152px; }
.g-draw { flex: none; width: 549px; margin-left: 1px; }
.g-view { flex: 1; margin-left: 2px; padding: 0 3px 0 1px; }
.viewsel, .selwrap { position: relative; display: flex; align-items: center; }
.viewsel {
  gap: 3px;
  width: 62px;
  height: 23px;
  padding-left: 2px;
  border: 1px solid #666;
  margin-right: -3px;
}
.viewsel select { width: 40px; color: #808080; }
.viewsel::after, .selwrap::after {
  content: "";
  position: absolute;
  right: 3px;
  border: 3px solid transparent;
  border-top-color: #444;
  border-bottom: 0;
}

/* body */
.main { position: relative; flex: 1; display: flex; gap: 6px; min-height: 0; padding-bottom: 2px; }
.nav { display: flex; flex-direction: column; width: 209px; border-right: 1px solid #999; }
.nav-head {
  display: flex;
  align-items: center;
  gap: 9px;
  height: 15px;
  padding-right: 4px;
  border: 1px solid #888;
  margin-bottom: 2px;
}
.nav-head span { margin-right: auto; }
.bar {
  justify-content: center;
  height: 22px;
  border: 1px solid #a0a0a0;
  border-top-color: #fff;
}
.bar.active { border-bottom: 2px solid #777; }
.nav-tools { display: flex; gap: 6px; height: 27px; padding: 0 7px; background: linear-gradient(#fff, #ececec); }
.tree {
  flex: 1;
  margin: 0 1px;
  padding-top: 1px;
  border: 1px solid #828790;
  background: #fff;
}
.node, .tree li li { display: flex; align-items: center; height: 16px; white-space: nowrap; }
.node { padding-left: 7px; }
.tog { width: 10px; height: 10px; margin-right: 6px; }
.fo { width: 16px; height: 14px; margin-right: 5px; }
.tree ul { position: relative; margin-left: 32px; border-left: 1px dotted #888; }
.nav .tree ul::before {
  content: "";
  position: absolute;
  left: -21px;
  top: 0;
  bottom: 0;
  border-left: 1px dotted #888;
}
.tree li li::before { content: ""; width: 11px; border-top: 1px dotted #888; }
.ic { width: 14px; height: 14px; margin-right: 6px; }
.cur { display: flex; align-items: center; margin-left: -3px; padding-left: 3px; padding-right: 5px; background: #d9d9d9; }

.work { flex: 1; min-width: 0; display: flex; flex-direction: column; }
.g-comp { height: 27px; gap: 6px; }
.floor { display: flex; align-items: center; gap: 3px; }
.floor .selwrap { margin-left: 3px; background: #fff; width: 62px; height: 22px; }
.floor select { width: 62px; padding-left: 2px; }
.panes { flex: 1; display: flex; gap: 4px; min-height: 0; }
.comps { display: flex; flex-direction: column; width: 184px; background: #fff; margin-top: 4px; }
.search { display: flex; height: 27px; padding: 2px 0 1px 1px; margin: 0; }
.search input { width: 157px; padding: 0 1px; border: 1px solid #767676; background: #fff; }
.search button { flex: 1; justify-content: center; }
input::placeholder { color: #757575; opacity: 1; }
.comp-tree { margin: 0; }
.comp-tree ul { margin-left: 31px; }
.comp-tree .fo { width: 14px; margin-right: 6px; }
.lf { display: flex; align-items: center; padding: 0 5px 0 3px; height: 16px; margin-left: -2px; }
.lf.sel { background: #316ac5; }
.ge { width: 12px; height: 12px; margin-right: 7px; }

.props { flex: 1; min-width: 0; display: flex; flex-direction: column; background: #fff; padding: 0 5px 1px 0; border-left: 1px solid #ccc; }
.tabs { display: flex; height: 22px; }
.tabs .on { padding: 0 8px 0 5px; border-right: 1px solid #d0d0d0; }
.tabs::after { content: ""; flex: 1; border-bottom: 1px solid #d9d9d9; }
.sheet { flex: 1; display: flex; margin: 3px 0 0 2px; border: 1px solid #a0a0a0; }
table { flex: 1; align-self: flex-start; border-collapse: collapse; table-layout: fixed; width: 100%; }
th, td { height: 19px; padding: 0; border: 1px solid #c0c0c0; line-height: 16px; }
th { height: 23px; font-weight: normal; background: linear-gradient(#fff, #eee); border-top: 0; }
th:first-child { width: 21px; }
th:nth-child(2) { width: 191px; }
th.hl { background: linear-gradient(#fbdca0, #f3c064); color: #600050; text-align: left; padding-left: 43px; }
td:first-child { background: #f4f4f4; text-align: center; }
td:nth-child(2) { padding-left: 19px; }
td:nth-child(3) { padding-left: 1px; }
tr.on td { background: #d8e9f8; }
tr.on td:first-child { background: #fcd48c; }
tr.on td:nth-child(2) { background: #0078d7; color: #fff; }
tr.key td:nth-child(2) { color: #00f; }
tr.off td:nth-child(n+2) { color: #808080; }
tr.exp td:nth-child(2) { padding-left: 2px; }
td button {
  float: left;
  justify-content: center;
  width: 13px;
  height: 13px;
  margin: 2px 4px 0 0;
  border: 1px solid #999;
  background: #fff;
  color: #000;
}
.rb { display: inline-block; width: 10px; height: 10px; margin: 0 1px; vertical-align: -1px; }
.scroll { display: flex; flex-direction: column; align-items: center; width: 16px; padding: 8px 0; background: #f0f0f0; }
.scroll i { flex: 348; width: 16px; margin-top: 5px; background: #cdcdcd; }
.scroll b { flex: 184; }

/* section editor window */
.dialog {
  position: absolute;
  left: 726px;
  right: 22px;
  top: 49px;
  bottom: 3px;
  display: flex;
  flex-direction: column;
  padding: 0 6px 6px 5px;
  border: 1px solid #222;
  box-shadow: inset -1px -1px #40c8e8;
  background: linear-gradient(#99b4d1, #b9d1ea 30px);
}
h2 { margin: 0; padding: 9px 1px 4px; font: inherit; height: 29px; }
.dlg-body { flex: 1; display: flex; flex-direction: column; background: #f0f0f0; }
.dlg-tabs { display: flex; align-items: flex-end; height: 21px; padding-left: 2px; }
.dlg-tabs button { height: 19px; padding: 0 16px 0 6px; border: 1px solid #d9d9d9; border-bottom: 0; }
.dlg-tabs .on { height: 21px; padding: 0 20px 1px 6px; background: #fff; }
.dlg-page { flex: 1; display: flex; flex-direction: column; margin: 0 1px; padding: 2px 2px 2px 3px; border: 2px solid #fafafa; border-top: 1px solid #d9d9d9; }
.dlg-tools, .dlg-info { display: flex; align-items: center; border-radius: 3px; background: linear-gradient(#fcfcfc, #f0f0f0); }
.dlg-tools { height: 28px; }
.dlg-info { align-self: flex-start; height: 25px; margin: 1px 0 3px; padding-right: 2px; color: #808080; gap: 2px; }
.dlg-tools button { height: 24px; padding: 0 5px; }
.dlg-tools .sep { margin: 0 2px 0 3px; }
.dlg-tools .on { border: 1px solid #0078d7; background: #dfebf5; padding: 0 4px; }
.grip { width: 3px; height: 16px; margin: 0 3px 0 1px; border-left: 2px dotted #bbb; }
.dlg-info .grip { margin-right: 4px; }
.dlg-info .selwrap { width: 133px; height: 23px; border: 1px solid #707070; background: #f4f4f4; }
.dlg-info select { width: 130px; padding-left: 2px; color: #808080; }
.cad { flex: 1 1 0; width: 100%; min-height: 0; border: 2px solid #f00; background: #000; }
.cad path, .cad rect { fill: none; }
.grid { stroke: #303030; }
.grid .axis { stroke: #505050; }
.scale { fill: #403830; font: 11px "Noto Sans CJK SC", sans-serif; }
.outline { stroke: #fff; stroke-width: 2; }
.dim { stroke: #0f0; }
.leader { stroke: #fff; }
.bars { stroke: #f00; stroke-width: 4; }
.bars .thin { stroke-width: 3; }
.dot { stroke-width: 1; fill: #400; }
.dot.y { stroke: #ff0; }
.dot.m { stroke: #f0f; }
.val, .spec { fill: #fff; font: 16px "Liberation Serif", serif; }
.spec { fill: #0f0; font-size: 15px; }
.note { fill: #fff; font: 16px "Noto Sans CJK SC", sans-serif; }
.dlg-status { display: flex; gap: 2px; height: 24px; padding: 3px 1px 1px; position: relative; }
.dlg-status span { border: 1px solid #d5d5d5; background: #f8f8f8; padding: 1px; }
.dlg-status span:first-child { width: 148px; padding-left: 8px; }
.dlg-status span:nth-child(2) { flex: 1; }
.dlg-status svg { position: absolute; right: 2px; bottom: 2px; }

/* status bar */
.status { position: relative; display: flex; gap: 2px; height: 22px; padding-top: 2px; }
.status span { width: 98px; border: 1px solid #d5d5d5; background: #f8f8f8; padding: 1px; white-space: nowrap; }
.status span:nth-child(1) { width: 148px; }
.status span:nth-child(2) { width: 78px; }
.status span:nth-child(4) { width: 48px; }
.status span:nth-child(5) { flex: 1; }
.ime {
  position: absolute;
  right: 0;
  bottom: 0;
  display: flex;
  align-items: center;
  gap: 7px;
  height: 24px;
  padding-right: 3px;
  border: 1px solid #b8cce4;
  background: #fff;
  color: #1b76cc;
}
.ime svg:first-child { margin: 0 -2px 0 -2px; }
.ime b { font-size: 14px; }
.tiny { font: bold 9px "Liberation Sans", sans-serif; fill: #8c9cb8; }

/* taskbar */
.taskbar { display: flex; align-items: stretch; height: 40px; background: linear-gradient(90deg, #000, #071316 30%, #041014 70%, #000); color: #fff; }
.start { width: 48px; justify-content: center; background: #000; }
.find { display: flex; align-items: center; gap: 5px; width: 344px; padding: 0 14px 0 9px; background: #333; }
.find input { flex: 1; min-width: 0; border: 0; background: none; font-size: 14px; padding: 0; }
.find input::placeholder { color: #a0a0a0; }
.apps { display: flex; align-items: stretch; padding-left: 2px; }
.apps button { width: 49px; justify-content: center; }
.apps .dbl { width: 4px; height: 16px; margin: 12px 10px; border: solid #333; border-width: 0 1px; }
.apps .run { box-shadow: inset 0 -2px #76b9ed; width: 40px; margin-left: 5px; }
.apps .run + .run:not(.cur) { margin-left: 9px; }
.apps .run.cur { width: 48px; background: #343d42; }
.swirl { color: #1e9cf0; }
.cpu { margin-left: auto; width: 60px; padding-top: 3px; text-align: center; line-height: 17px; }
.tray { display: flex; align-items: center; gap: 10px; margin-left: 14px; }
.clock { width: 80px; margin-left: 6px; padding-top: 2px; text-align: center; line-height: 18px; }
.note-btn { width: 38px; justify-content: center; }
.note-btn text { fill: #fff; font-size: 12px; font-weight: bold; }
.edge { width: 1px; margin: 0 4px 0 5px; background: #444; }
```
